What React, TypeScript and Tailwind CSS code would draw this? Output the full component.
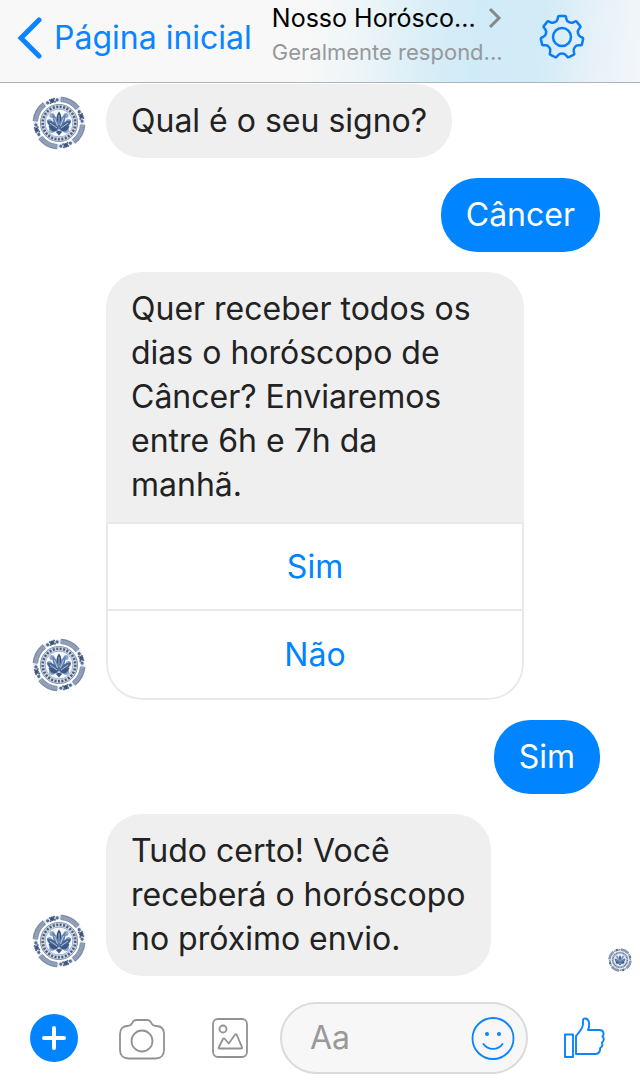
import { useState, type ReactNode } from 'react';

// A one-to-one chat with a horoscope page: navigation bar, message thread and
// the composer at the bottom.

type Message =
  | { from: 'page'; text: string; options?: string[]; seen?: boolean }
  | { from: 'me'; text: string };

const MESSAGES: Message[] = [
  { from: 'page', text: 'Qual é o seu signo?' },
  { from: 'me', text: 'Câncer' },
  {
    from: 'page',
    text: 'Quer receber todos os\ndias o horóscopo de\nCâncer? Enviaremos\nentre 6h e 7h da\nmanhã.',
    options: ['Sim', 'Não'],
  },
  { from: 'me', text: 'Sim' },
  { from: 'page', text: 'Tudo certo! Você\nreceberá o horóscopo\nno próximo envio.', seen: true },
];

export default function App() {
  return (
    <div className="flex min-h-screen flex-col bg-white font-['Inter',sans-serif] text-[#222222]">
      <Header />
      <main className="flex flex-1 flex-col gap-5 pt-px">
        {MESSAGES.map((message, i) => (
          <MessageRow key={i} message={message} />
        ))}
      </main>
      <Composer />
    </div>
  );
}

function Header() {
  return (
    <header className="flex h-[83px] items-start border-b border-[#aeb4b8] bg-[#f8f8f8] bg-[linear-gradient(97deg,#f8f8f8_48%,#eef5f8_56%,#daeef7_66%,#d0ebf8_74%,#d3ebf7_84%,#e6f1f8_92%,#f3f6fa_100%)] pl-4">
      <a href="#inicio" className="flex items-center gap-3 pt-4 text-[32px] leading-[44px] text-[#0a84ff]">
        <svg viewBox="0 0 26 44" className="h-11 w-[26px]" fill="none" stroke="currentColor" strokeWidth="5" strokeLinecap="round" strokeLinejoin="miter" aria-hidden>
          <path d="M23 4 5 22l18 18" />
        </svg>
        Página inicial
      </a>
      <button type="button" className="ml-5 flex flex-col items-start pt-1 text-left">
        <span className="flex items-center gap-3 text-[25px] leading-7 text-black">
          Nosso Horósco...
          <svg viewBox="0 0 14 20" className="h-5 w-3.5" fill="none" stroke="#85898d" strokeWidth="3" aria-hidden>
            <path d="m2 1 9 9-9 9" />
          </svg>
        </span>
        <span className="pt-1 text-[22px] leading-8 text-[#96999b]">Geralmente respond...</span>
      </button>
      <button type="button" aria-label="Configurações" className="mt-3.5 mr-[55px] ml-auto">
        <GearIcon />
      </button>
    </header>
  );
}

function MessageRow({ message }: { message: Message }) {
  if (message.from === 'me') {
    return (
      <div className="flex justify-end pr-10">
        <p className="rounded-[36px] bg-[#0084ff] px-[25px] py-[15px] text-[32px] leading-[44px] text-white">{message.text}</p>
      </div>
    );
  }

  return (
    <div className="flex items-end pr-2 pl-8">
      <Avatar className="mb-2 size-[54px] shrink-0" />
      {message.options ? (
        <div className="ml-5 w-[418px] overflow-hidden rounded-[36px]">
          <p className="bg-[#efefef] px-[25px] py-[15px] text-[32px] leading-[44px] whitespace-pre-line">{message.text}</p>
          <div className="divide-y-2 divide-[#e8e9ea] rounded-b-[36px] border-2 border-[#e8e9ea]">
            {message.options.map((option) => (
              <button key={option} type="button" className="block h-[87px] w-full text-[32px] leading-[44px] text-[#0084ff]">
                {option}
              </button>
            ))}
          </div>
        </div>
      ) : (
        <Bubble>{message.text}</Bubble>
      )}
      {message.seen && <Avatar className="mb-1 ml-auto size-6 shrink-0" />}
    </div>
  );
}

function Bubble({ children }: { children: ReactNode }) {
  return (
    <p className="ml-5 rounded-[36px] bg-[#efefef] px-[25px] py-[15px] text-[32px] leading-[44px] whitespace-pre-line">{children}</p>
  );
}

function Composer() {
  const [draft, setDraft] = useState('');

  return (
    <footer className="flex items-center gap-[26px] pt-6 pr-[26px] pb-4 pl-[30px]">
      <div className="flex items-center gap-10">
        <button type="button" aria-label="Mais" className="size-12 rounded-full bg-[#0084ff]">
          <svg viewBox="0 0 48 48" fill="none" stroke="#fff" strokeWidth="4" strokeLinecap="round" aria-hidden>
            <path d="M24 14v20M14 24h20" />
          </svg>
        </button>
        <button type="button" aria-label="Câmera" className="size-12">
          <svg viewBox="0 0 48 48" fill="none" stroke="#929292" strokeWidth="1.8" strokeLinejoin="round" aria-hidden>
            <path d="M9.5 12c3 0 3.800-1 4.700-3s1.800-3 4.300-3h10.500c2.500 0 3.400 1 4.300 3s1.700 3 4.700 3c5 0 8 3 8 8v16c0 5-3 8.500-8.500 8.500h-27C5 44.500 2 41 2 36V20c0-5 3-8 7.500-8Z" />
            <circle cx="24" cy="27" r="10.5" />
          </svg>
        </button>
        <button type="button" aria-label="Fotos" className="size-12">
          <svg viewBox="0 0 48 48" fill="none" stroke="#929292" strokeWidth="1.8" strokeLinejoin="round" aria-hidden>
            <rect x="7" y="5" width="34" height="38" rx="5" />
            <circle cx="17" cy="15" r="3.5" />
            <path d="M12.7 33.500 17 25q.8-1.300 1.700-.2l4 4.700 6.300-8.800q1-1.200 1.800.3l5.200 12.200q.5 1.300-.7 1.300H13.400q-1.200 0-.7-1Z" />
          </svg>
        </button>
      </div>
      <div className="flex h-[72px] min-w-0 flex-1 items-center rounded-full border-2 border-[#dadbdc] bg-[#f7f7f7] pr-[11px] pl-7">
        <input
          type="text"
          value={draft}
          onChange={(e) => setDraft(e.target.value)}
          placeholder="Aa"
          aria-label="Mensagem"
          className="min-w-0 flex-1 bg-transparent text-[32px] leading-[44px] outline-none placeholder:text-[#999999]"
        />
        <button type="button" aria-label="Emoji" className="size-11 shrink-0">
          <svg viewBox="0 0 44 44" fill="none" stroke="#0a84ff" strokeWidth="1.8" strokeLinecap="round" aria-hidden>
            <circle cx="22" cy="22.5" r="20.5" />
            <path d="M12.5 28c4.500 6.500 14.500 6.500 19 0" />
            <circle cx="16" cy="18" r="2" fill="#0a84ff" stroke="none" />
            <circle cx="28" cy="18" r="2" fill="#0a84ff" stroke="none" />
          </svg>
        </button>
      </div>
      <button type="button" aria-label="Curtir" className="flex w-[60px] justify-center">
        <svg viewBox="0 0 42 44" className="h-11 w-[42px]" fill="none" stroke="#0a84ff" strokeWidth="1.9" strokeLinejoin="round" aria-hidden>
          <path d="M2 18.500h8v22.500H2Z" />
          <path d="M13 38V20c3.500-4 7-7.500 7-12V4.500c0-3 4.500-2.800 5.700 1 1 3.500.7 5.500-.7 8.500h11.500c4.500 0 4.800 4.500 3 6.500 1.800 2 1.300 4.500-.6 6.300 1 2.200.2 4.200-1.700 5.200.1 3-1.200 6-4.700 6Z" />
        </svg>
      </button>
    </footer>
  );
}

// Seven-toothed cog outline, traced clockwise from the top tooth.
const GEAR_PATH = (() => {
  const at = (r: number, deg: number) => {
    const a = ((deg - 90) * Math.PI) / 180;
    return `${(23 + r * Math.cos(a)).toFixed(2)} ${(23 + r * Math.sin(a)).toFixed(2)}`;
  };
  const step = 360 / 7;
  let d = '';
  for (let i = 0; i < 7; i++) {
    const c = i * step;
    d += `${i === 0 ? 'M' : 'L'}${at(19.6, c - 12)}Q${at(21.5, c - 11)} ${at(21.2, c - 7)}L${at(21.2, c + 7)}Q${at(21.5, c + 11)} ${at(19.6, c + 12)}`;
    d += `L${at(18.4, c + 14)}C${at(16, c + 18)} ${at(16, c + step - 18)} ${at(18.4, c + step - 14)}`;
  }
  return `${d}Z`;
})();

function GearIcon() {
  return (
    <svg viewBox="0 0 46 46" className="size-[46px]" fill="none" stroke="#0a7cf5" strokeWidth="2.5" strokeLinejoin="round" aria-hidden>
      <path d={GEAR_PATH} />
      <circle cx="23" cy="23" r="9" />
    </svg>
  );
}

// Porcelain-style medallion: patterned rim, beaded ring and a lotus.
function Avatar({ className }: { className: string }) {
  return (
    <svg viewBox="0 0 54 54" className={className} fill="none" aria-hidden>
      <circle cx="27" cy="27" r="23.5" stroke="#e3e8f0" strokeWidth="4" />
      {[-62, 28, 118, 208].map((deg) => (
        <g key={deg} transform={`rotate(${deg} 27 27)`}>
          {/* lattice panel */}
          <path d="M48.5 17.500A23.500 23.500 0 0 1 48.500 36.500" stroke="#8392ad" strokeWidth="5" />
          <path d="M48.5 17.500A23.500 23.500 0 0 1 48.500 36.500" stroke="#a0adc2" strokeWidth="3" strokeDasharray=".8 .8" />
          <path d="M50.8 16.500A26 26 0 0 1 50.800 37.500" stroke="#627394" strokeWidth=".6" />
          {/* floral gap between two panels */}
          <g fill="#566b90">
            <circle cx="46.5" cy="39.5" r="1.6" />
            <circle cx="43.5" cy="43.5" r="2.2" fill="#3f547c" />
            <circle cx="39.5" cy="46.5" r="1.6" />
            <circle cx="45.8" cy="43" r="1" />
            <circle cx="42.8" cy="46.2" r="1" />
            <circle cx="43.8" cy="40.5" r="1" />
            <circle cx="40.5" cy="43.8" r="1" />
          </g>
        </g>
      ))}
      <circle cx="27" cy="27" r="16.3" stroke="#cdd6e2" strokeWidth="5" />
      <circle cx="27" cy="27" r="18.6" stroke="#8191aa" strokeWidth=".9" />
      <circle cx="27" cy="27" r="16.3" stroke="#4b5f80" strokeWidth="2.6" strokeDasharray="2 1.500" />
      <circle cx="27" cy="27" r="13.8" stroke="#8a9ab3" strokeWidth=".9" />
      <circle cx="27" cy="27" r="13.3" fill="#f4f7fb" />
      <g fill="#8ba6ca">
        <circle cx="20" cy="19.5" r="2.5" />
        <circle cx="34" cy="19.5" r="2.5" />
        <circle cx="17.5" cy="25.5" r="2.5" />
        <circle cx="36.5" cy="25.5" r="2.5" />
        <circle cx="20" cy="34" r="3" />
        <circle cx="34" cy="34" r="3" />
      </g>
      <g fill="#486694">
        <path d="M27 15.500c3.500 4 3.500 12 0 18-3.500-6-3.500-14 0-18Z" fill="#34507e" />
        <path d="M20.500 18c4 2 6 8 6.500 15-5-4-7-9-6.500-15ZM33.500 18c-4 2-6 8-6.500 15 5-4 7-9 6.500-15Z" fill="#6483b0" />
        <path d="M15 24.500c6 0 10 3 12 9-6 1-11-3-12-9ZM39 24.500c-6 0-10 3-12 9 6 1 11-3 12-9Z" />
        <path d="M16.500 30c4 0 8 2 10.500 5 2.500-3 6.500-5 10.500-5-2 5-5 6-7 5.500l-3.500 4-3.500-4c-2 .5-5-.5-7-5.500Z" fill="#3c5786" />
      </g>
      <g stroke="#dfe8f3" strokeWidth=".7">
        <path d="M27 19v10M22.500 22l3 8M31.500 22l-3 8M18 27l7 5M36 27l-7 5M23 36l4-2 4 2" />
      </g>
    </svg>
  );
}
